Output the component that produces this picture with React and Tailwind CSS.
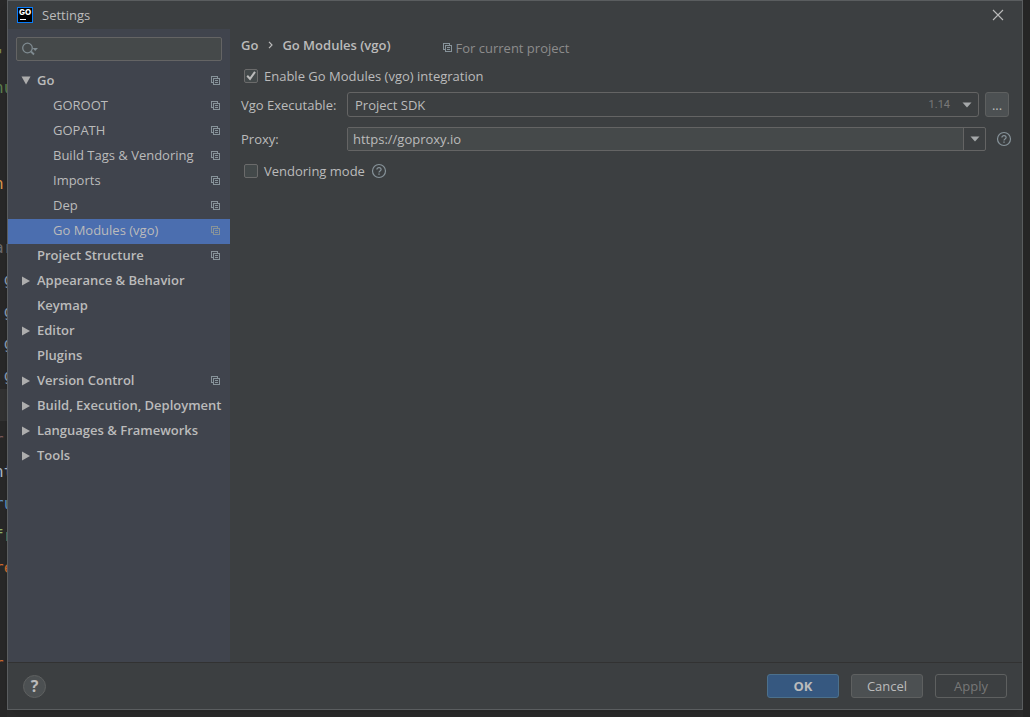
import { useState } from 'react';

const tree = [
  {
    id: 'go',
    label: 'Go',
    project: true,
    children: [
      { id: 'goroot', label: 'GOROOT' },
      { id: 'gopath', label: 'GOPATH' },
      { id: 'tags', label: 'Build Tags & Vendoring' },
      { id: 'imports', label: 'Imports' },
      { id: 'dep', label: 'Dep' },
      { id: 'vgo', label: 'Go Modules (vgo)' },
    ],
  },
  { id: 'structure', label: 'Project Structure', project: true },
  { id: 'appearance', label: 'Appearance & Behavior', children: [] },
  { id: 'keymap', label: 'Keymap' },
  { id: 'editor', label: 'Editor', children: [] },
  { id: 'plugins', label: 'Plugins' },
  { id: 'vcs', label: 'Version Control', project: true, children: [] },
  { id: 'build', label: 'Build, Execution, Deployment', children: [] },
  { id: 'languages', label: 'Languages & Frameworks', children: [] },
  { id: 'tools', label: 'Tools', children: [] },
];

// what is left visible of the editor behind the dialog
const editorLines = [
  { text: '' },
  { text: '"', color: 'text-[#7d8a4e]' },
  { text: 'nu', color: 'text-[#5c7f4f]' },
  { text: '' },
  { text: '' },
  { text: 'n', color: 'text-[#d9954a]' },
  { text: '' },
  { text: 'ar', color: 'text-[#6b6b6b]' },
  { text: ' g', color: 'text-[#8a9bb0]' },
  { text: ' g', color: 'text-[#8a9bb0]' },
  { text: ' g', color: 'text-[#8a9bb0]' },
  { text: ' g', color: 'text-[#8a9bb0]' },
  { text: '', row: 'bg-[#323232]' },
  { text: 'r', color: 'text-[#7a5a5a]' },
  { text: 'nt', color: 'text-[#a9b7c6]' },
  { text: 'ru', color: 'text-[#5c8fc0]' },
  { text: 'fr', color: 'text-[#8fb36a]' },
  { text: 're', color: 'text-[#cc6a2e]' },
  { text: '' },
  { text: '' },
  { text: 'r', color: 'text-[#cc6a2e]' },
];

function ProjectIcon() {
  return (
    <svg
      width="10"
      height="10"
      viewBox="0 0 10 10"
      fill="none"
      stroke="#87939a"
      shapeRendering="crispEdges"
      className="shrink-0"
    >
      <path d="M2 6.5H0.5V0.5H6.5V2" />
      <path d="M2.5 2.5H8.5V8.5H2.5Z" />
      <path d="M4 4.5H7M4 6.5H7" />
    </svg>
  );
}

function HelpIcon() {
  return (
    <svg width="16" height="16" viewBox="0 0 16 16" fill="none" stroke="#87939a" strokeWidth="1.2">
      <circle cx="8" cy="8" r="6.5" />
      <path d="M5.9 6.6C5.9 5.4 6.8 4.6 8 4.6s2.1.8 2.1 1.9c0 1.4-2.1 1.5-2.1 3" />
      <path d="M8 10.4v1.3" strokeWidth="1.4" />
    </svg>
  );
}

function Arrow({ open }) {
  return (
    <svg width="10" height="10" viewBox="0 0 10 10" fill="#adadad" className="shrink-0">
      {open ? <path d="M0.5 0.5H9.5L5 8.5Z" /> : <path d="M1 0.5L9 5L1 9.5Z" />}
    </svg>
  );
}

function DownArrow() {
  return (
    <svg width="10" height="6" viewBox="0 0 10 6" fill="#a5a8aa">
      <path d="M0.5 0.5H9.5L5 5.5Z" />
    </svg>
  );
}

function GoLogo() {
  return (
    <svg width="16" height="16" viewBox="0 0 16 16" className="shrink-0">
      <rect x="0.5" y="0.5" width="15" height="15" fill="#000" stroke="#087cfa" />
      <text
        x="8"
        y="8"
        textAnchor="middle"
        fontFamily="Inter, sans-serif"
        fontSize="8"
        fontWeight="800"
        fill="#fff"
      >
        GO
      </text>
      <path d="M3 12.5H9" stroke="#fff" />
    </svg>
  );
}

function TreeRow({ item, child, open, selected, onClick }) {
  return (
    <li>
      <button
        onClick={onClick}
        className={`flex h-[25px] w-full items-center pr-[9px] pb-[2px] text-left whitespace-nowrap ${
          child ? 'pl-[45px]' : 'gap-[6px] pl-[13px] font-semibold'
        } ${selected ? 'bg-[#4b6eaf]' : ''}`}
      >
        {!child && (item.children ? <Arrow open={open} /> : <span className="w-[10px]" />)}
        <span className="flex-1 pb-px">{item.label}</span>
        {(child || item.project) && <ProjectIcon />}
      </button>
    </li>
  );
}

function Sidebar() {
  const [openId, setOpenId] = useState('go');
  const [selected, setSelected] = useState('vgo');

  const handleClick = (item) => {
    if (item.children) {
      setOpenId(openId === item.id ? '' : item.id);
    } else {
      setSelected(item.id);
    }
  };

  return (
    <nav className="w-[222px] shrink-0 bg-[#40444d] pt-2">
      <div className="mx-2 flex h-6 items-center rounded-[2px] border border-[#646464] bg-[#45494a] pl-1">
        <svg width="18" height="14" viewBox="0 0 18 14" fill="none" stroke="#7f8b91" strokeWidth="1.3">
          <circle cx="6.5" cy="6" r="4.8" />
          <path d="M10 9.5L13 12.5" strokeWidth="1.8" />
          <path d="M11.5 6H17L14.2 9Z" fill="#7f8b91" stroke="none" />
        </svg>
        <input type="text" aria-label="Search settings" className="min-w-0 flex-1 bg-transparent outline-none" />
      </div>

      <ul className="mt-2">
        {tree.map((item) => (
          <li key={item.id}>
            <ul>
              <TreeRow
                item={item}
                open={openId === item.id}
                selected={selected === item.id}
                onClick={() => handleClick(item)}
              />
              {openId === item.id &&
                item.children?.map((c) => (
                  <TreeRow
                    key={c.id}
                    item={c}
                    child
                    selected={selected === c.id}
                    onClick={() => handleClick(c)}
                  />
                ))}
            </ul>
          </li>
        ))}
      </ul>
    </nav>
  );
}

function Checkbox({ id, label, checked, onChange }) {
  return (
    <div className="flex items-center gap-[6px] pl-[3px]">
      <span className="relative flex">
        <input
          id={id}
          type="checkbox"
          checked={checked}
          onChange={(e) => onChange(e.target.checked)}
          className="h-[14px] w-[14px] appearance-none rounded-[2px] border border-[#6b6b6b] bg-[#43494a]"
        />
        {checked && (
          <svg
            width="14"
            height="14"
            viewBox="0 0 14 14"
            fill="none"
            stroke="#bbbbbb"
            strokeWidth="2"
            className="pointer-events-none absolute inset-0"
          >
            <path d="M3.2 6.8L6 9.8L11 2.8" />
          </svg>
        )}
      </span>
      <label htmlFor={id}>{label}</label>
    </div>
  );
}

function GoModules() {
  const [enabled, setEnabled] = useState(true);
  const [vendoring, setVendoring] = useState(false);
  const [proxy, setProxy] = useState('https://goproxy.io');

  return (
    <main className="min-w-0 flex-1 pt-[6px] pr-[10px] pl-[11px]">
      <div className="flex h-7 items-start">
        <h1 className="flex h-5 items-center font-semibold">
          Go
          <svg width="24" height="8" viewBox="0 0 24 8" fill="none" stroke="#bbbbbb" strokeWidth="1.2">
            <path d="M11 0.8L14 4L11 7.2" />
          </svg>
          Go Modules (vgo)
        </h1>
        <div className="ml-[52px] flex items-center gap-[3px] pt-[3px] text-[#8c8c8c]">
          <ProjectIcon />
          For current project
        </div>
      </div>

      <div className="flex h-[26px] items-center">
        <Checkbox id="enable" label="Enable Go Modules (vgo) integration" checked={enabled} onChange={setEnabled} />
      </div>

      <div className="mt-[3px] flex h-[25px] items-center">
        <label htmlFor="executable" className="w-[106px] shrink-0">
          Vgo Executable:
        </label>
        <div className="relative h-full flex-1">
          <select
            id="executable"
            className="h-full w-full appearance-none rounded-[3px] border border-[#646464] bg-[#3c3f41] pl-[7px]"
          >
            <option>Project SDK</option>
          </select>
          <div className="pointer-events-none absolute inset-y-0 right-[7px] flex items-center gap-3 font-[Roboto,sans-serif] text-[11px] text-[#787878]">
            1.14
            <DownArrow />
          </div>
        </div>
        <button
          aria-label="Browse"
          className="mr-[3px] ml-[6px] h-full w-6 rounded-[3px] border border-[#5e6060] bg-[#4c5052]"
        >
          ...
        </button>
      </div>

      <div className="mt-[10px] flex h-6 items-center">
        <label htmlFor="proxy" className="w-[106px] shrink-0">
          Proxy:
        </label>
        <div className="flex h-full flex-1 rounded-[2px] border border-[#646464]">
          <input
            id="proxy"
            type="text"
            value={proxy}
            onChange={(e) => setProxy(e.target.value)}
            className="min-w-0 flex-1 bg-[#45494a] pl-[5px] outline-none"
          />
          <button
            aria-label="Recent proxies"
            className="flex w-[22px] items-center justify-center border-l border-[#646464]"
          >
            <DownArrow />
          </button>
        </div>
        <button aria-label="Proxy help" className="ml-[10px]">
          <HelpIcon />
        </button>
      </div>

      <div className="mt-[10px] flex h-5 items-center gap-[6px]">
        <Checkbox id="vendoring" label="Vendoring mode" checked={vendoring} onChange={setVendoring} />
        <button aria-label="Vendoring help">
          <HelpIcon />
        </button>
      </div>
    </main>
  );
}

export default function App() {
  return (
    <div className="flex h-screen bg-[#2b2b2b] font-['Open_Sans',sans-serif] text-[13px] leading-5 text-[#bbbbbb]">
      <div
        aria-hidden="true"
        className="w-[7px] shrink-0 overflow-hidden bg-[#282828] pt-[5px] font-['DejaVu_Sans_Mono',monospace] text-[16px]"
      >
        {editorLines.map((line, i) => (
          <div key={i} className={`h-8 pt-[9px] whitespace-pre ${line.row || ''} ${line.color || ''}`}>
            <span className="-ml-[6px]">{line.text}</span>
          </div>
        ))}
      </div>

      <div
        role="dialog"
        aria-label="Settings"
        className="mb-[7px] flex min-w-0 flex-1 flex-col border border-[#5a5d5f] bg-[#3c3f41] shadow-lg"
      >
        <header className="flex h-7 shrink-0 items-center gap-[9px] pr-[18px] pl-[9px]">
          <GoLogo />
          <span className="flex-1">Settings</span>
          <button aria-label="Close">
            <svg width="12" height="12" viewBox="0 0 12 12" stroke="#bbbbbb" strokeWidth="1.1">
              <path d="M1 1L11 11M11 1L1 11" />
            </svg>
          </button>
        </header>

        <div className="flex min-h-0 flex-1">
          <Sidebar />
          <GoModules />
        </div>

        <footer className="flex h-[47px] shrink-0 items-center gap-3 border-t border-[#323232] px-[15px]">
          <button
            aria-label="Help"
            className="mr-auto h-[23px] w-[23px] rounded-full border border-[#5e6060] bg-[#4c5052] text-[16px] leading-5 font-bold"
          >
            ?
          </button>
          <button className="h-6 w-[72px] rounded-[3px] border border-[#4c708c] bg-[#365880] font-bold">OK</button>
          <button className="h-6 w-[72px] rounded-[3px] border border-[#5e6060] bg-[#4c5052]">Cancel</button>
          <button disabled className="h-6 w-[72px] rounded-[3px] border border-[#5e6060] text-[#777777]">
            Apply
          </button>
        </footer>
      </div>

      <div aria-hidden="true" className="w-[7px] shrink-0 bg-[#252525]" />
    </div>
  );
}
